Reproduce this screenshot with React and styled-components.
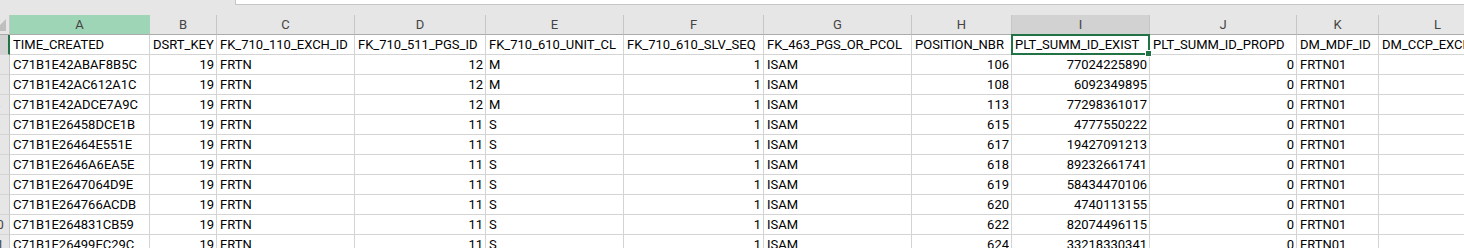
import React from "react";
import styled, { createGlobalStyle, css } from "styled-components";

const FONT = `"Roboto", "Liberation Sans", sans-serif`;
const FONT_SIZE = "13px";

const Global = createGlobalStyle`
  html, body { margin: 0; padding: 0; background: #ffffff; overflow: hidden; }
  body { width: 1464px; height: 248px; }
  #root { width: 1464px; height: 248px; overflow: hidden; }
`;

const Window = styled.div`
  width: 1464px;
  height: 248px;
  overflow: hidden;
  background: #ffffff;
  display: flex;
  flex-direction: column;
  font-family: ${FONT};
  font-size: ${FONT_SIZE};
`;

const TopStrip = styled.div`
  height: 15px;
  flex: 0 0 15px;
  background: #e6e6e6;
  display: flex;
  align-items: flex-start;
`;

const FormulaBox = styled.div`
  margin-left: 235px;
  flex: 1;
  height: 4px;
  background: #ffffff;
  border-left: 1px solid #c6c6c6;
  border-bottom: 1px solid #c6c6c6;
`;

const Sheet = styled.div`
  display: grid;
  grid-template-columns: 26px ${(p) => p.$cols.map((w) => `${w}px`).join(" ")};
  grid-auto-rows: 20px;
  margin-left: -16px;
  width: max-content;
`;

const Corner = styled.div`
  background: #e6e6e6;
  border-bottom: 1px solid #ababab;
  border-right: 1px solid #c6c6c6;
  box-sizing: border-box;
  display: flex;
  align-items: flex-end;
  justify-content: flex-end;
  padding: 0 3px 3px 0;
`;

const ColHeader = styled.div`
  box-sizing: border-box;
  background: ${(p) => (p.$green ? "#9fd5b7" : p.$selected ? "#d2d2d2" : "#e6e6e6")};
  border-right: 1px solid ${(p) => (p.$green ? "#9fd5b7" : "#c6c6c6")};
  border-bottom: 1px solid #ababab;
  color: #444444;
  text-align: center;
  line-height: 19px;
  white-space: nowrap;
  overflow: hidden;
`;

const RowHeader = styled.div`
  box-sizing: border-box;
  background: ${(p) => (p.$selected ? "#d2d2d2" : "#e6e6e6")};
  border-bottom: 1px solid #d4d4d4;
  border-right: ${(p) => (p.$selected ? "2px solid #217346" : "1px solid #c6c6c6")};
  color: #444444;
  text-align: center;
  line-height: 19px;
  white-space: nowrap;
  overflow: hidden;
`;

const Cell = styled.div`
  position: relative;
  box-sizing: border-box;
  border-right: 1px solid #d4d4d4;
  border-bottom: 1px solid #d4d4d4;
  color: #000000;
  line-height: 19px;
  white-space: nowrap;
  overflow: ${(p) => (p.$active ? "visible" : "hidden")};
  padding: 0 2px 0 3px;
  text-align: ${(p) => (p.$num ? "right" : "left")};
  ${(p) =>
    p.$active &&
    css`
      z-index: 2;
    `}
`;

const ActiveFrame = styled.div`
  position: absolute;
  left: -1px;
  top: -1px;
  right: -1px;
  bottom: -1px;
  border: 2px solid #217346;
  pointer-events: none;
`;

const FillHandle = styled.div`
  position: absolute;
  right: -4px;
  bottom: -4px;
  width: 5px;
  height: 5px;
  background: #217346;
  border: 1px solid #ffffff;
`;

const CellText = styled.span`
  display: block;
  overflow: hidden;
`;

const cols = [140, 67, 138, 131, 138, 140, 148, 100, 138, 147, 82, 118];
const letters = ["A", "B", "C", "D", "E", "F", "G", "H", "I", "J", "K", "L"];

const headers = [
  "TIME_CREATED",
  "DSRT_KEY",
  "FK_710_110_EXCH_ID",
  "FK_710_511_PGS_ID",
  "FK_710_610_UNIT_CL",
  "FK_710_610_SLV_SEQ",
  "FK_463_PGS_OR_PCOL",
  "POSITION_NBR",
  "PLT_SUMM_ID_EXIST",
  "PLT_SUMM_ID_PROPD",
  "DM_MDF_ID",
  "DM_CCP_EXCH_ID",
];

const numericCols = [false, true, false, true, false, true, false, true, true, true, false, false];

const rows = [
  ["C71B1E42ABAF8B5C", 19, "FRTN", 12, "M", 1, "ISAM", 106, "77024225890", 0, "FRTN01", ""],
  ["C71B1E42AC612A1C", 19, "FRTN", 12, "M", 1, "ISAM", 108, "6092349895", 0, "FRTN01", ""],
  ["C71B1E42ADCE7A9C", 19, "FRTN", 12, "M", 1, "ISAM", 113, "77298361017", 0, "FRTN01", ""],
  ["C71B1E26458DCE1B", 19, "FRTN", 11, "S", 1, "ISAM", 615, "4777550222", 0, "FRTN01", ""],
  ["C71B1E26464E551E", 19, "FRTN", 11, "S", 1, "ISAM", 617, "19427091213", 0, "FRTN01", ""],
  ["C71B1E2646A6EA5E", 19, "FRTN", 11, "S", 1, "ISAM", 618, "89232661741", 0, "FRTN01", ""],
  ["C71B1E2647064D9E", 19, "FRTN", 11, "S", 1, "ISAM", 619, "58434470106", 0, "FRTN01", ""],
  ["C71B1E264766ACDB", 19, "FRTN", 11, "S", 1, "ISAM", 620, "4740113155", 0, "FRTN01", ""],
  ["C71B1E264831CB59", 19, "FRTN", 11, "S", 1, "ISAM", 622, "82074496115", 0, "FRTN01", ""],
  ["C71B1E26499EC29C", 19, "FRTN", 11, "S", 1, "ISAM", 624, "33218330341", 0, "FRTN01", ""],
];

const SelectAllTriangle = () => (
  <svg width="12" height="12" viewBox="0 0 12 12">
    <polygon points="12,0 12,12 0,12" fill="#bfbfbf" />
  </svg>
);

export default function App() {
  return (
    <>
      <Global />
      <Window>
        <TopStrip>
          <FormulaBox />
        </TopStrip>
        <Sheet $cols={cols}>
          <Corner>
            <SelectAllTriangle />
          </Corner>
          {letters.map((l, i) => (
            <ColHeader key={l} $green={i === 0} $selected={i === 8}>
              {l}
            </ColHeader>
          ))}

          <RowHeader $selected>1</RowHeader>
          {headers.map((h, i) => (
            <Cell key={h} $active={i === 8}>
              <CellText>{h}</CellText>
              {i === 8 && (
                <ActiveFrame>
                  <FillHandle />
                </ActiveFrame>
              )}
            </Cell>
          ))}

          {rows.map((r, ri) => (
            <React.Fragment key={ri}>
              <RowHeader>{ri + 2}</RowHeader>
              {r.map((v, ci) => (
                <Cell key={ci} $num={numericCols[ci]}>
                  <CellText>{v}</CellText>
                </Cell>
              ))}
            </React.Fragment>
          ))}
        </Sheet>
      </Window>
    </>
  );
}
